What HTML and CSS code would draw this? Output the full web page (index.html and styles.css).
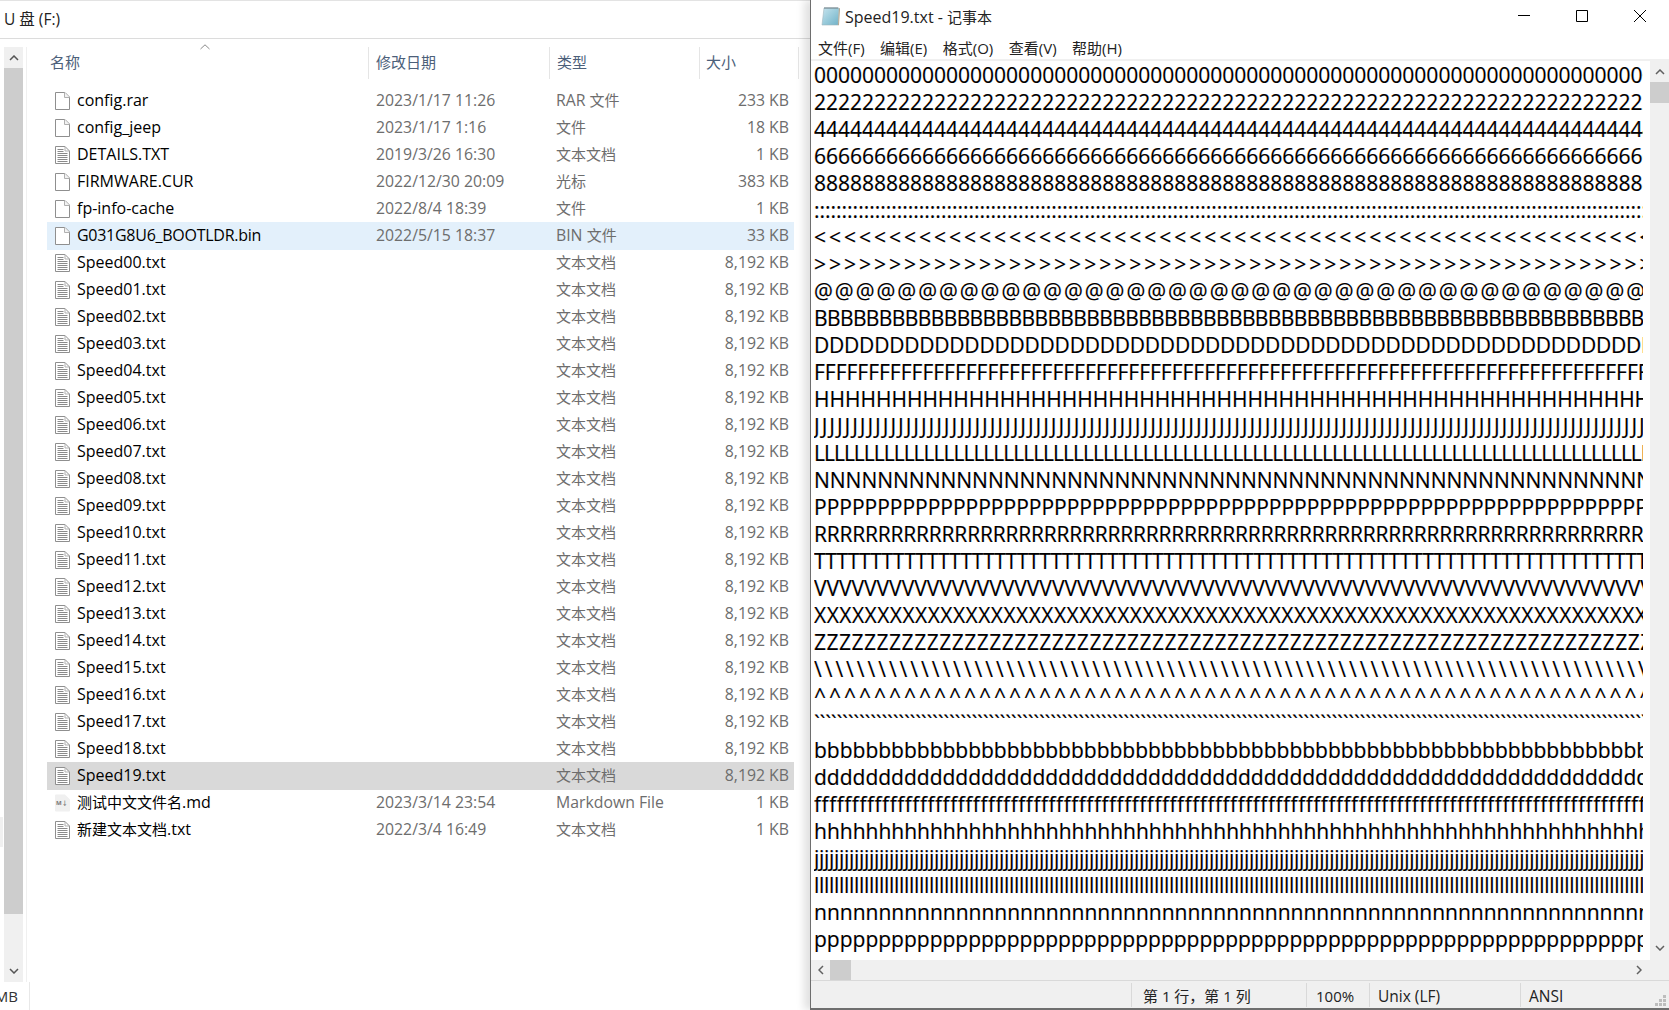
FILE: index.html
```html
<!doctype html>
<html lang="en">
<head>
    <meta charset="UTF-8">
    <meta name="viewport" content="width=device-width, initial-scale=1">
    <title>Speed19.txt - 记事本</title>
    <link rel="stylesheet" href="styles.css">
</head>
<body>
<svg class="defs" width="0" height="0">
    <symbol id="blank" viewBox="0 0 15 18">
        <path d="M.5.5h9.500l4.500 4.500v12.500h-14z" fill="#fff" stroke="#8f8f8f"/>
        <path d="M9.500.5v5h5" fill="#f2f2f2" stroke="#b0b0b0"/>
    </symbol>
    <symbol id="text" viewBox="0 0 15 18">
        <path d="M.5.500h9.500l4.500 4.500v12.500h-14z" fill="#fff" stroke="#8f8f8f"/>
        <path d="M10 .5v4.500h4.500" fill="none" stroke="#b0b0b0"/>
        <path d="M2.500 3.500h6M2.500 5.500h6M2.500 7.500h10M2.500 9.500h10M2.500 11.500h10M2.500 13.500h10M2.500 15.500h10" stroke="#8a8a8a"/>
    </symbol>
</svg>

<div class="desktop">
    <div class="explorer">
        <div class="path-bar">U 盘 (F:)</div>
        <div class="browser">
            <div class="edge"><span class="edge-mark"></span></div>
            <div class="scroll-v side-scroll">
                <svg class="arrow" width="10" height="6" viewBox="0 0 10 6"><path d="M1 5l4-4 4 4" fill="none" stroke="#555" stroke-width="1.500"/></svg>
                <div class="side-thumb"></div>
                <svg class="arrow" width="10" height="6" viewBox="0 0 10 6"><path d="M1 1l4 4 4-4" fill="none" stroke="#555" stroke-width="1.500"/></svg>
            </div>
            <div class="list">
                <div class="list-head">
                    <svg class="sort-caret" width="10" height="6" viewBox="0 0 10 6"><path d="M.5 5L5 .8 9.500 5" fill="none" stroke="#8a8a8a"/></svg>
                    <div class="col-name">名称</div>
                    <div class="col-date">修改日期</div>
                    <div class="col-type">类型</div>
                    <div class="col-size">大小</div>
                </div>
                <div class="row"><div class="name"><svg class="file-icon"><use href="#blank"/></svg>config.rar</div><div class="cell">2023/1/17 11:26</div><div class="cell">RAR <span class="cjk">文件</span></div><div class="cell size">233 KB</div></div>
                <div class="row"><div class="name"><svg class="file-icon"><use href="#blank"/></svg>config_jeep</div><div class="cell">2023/1/17 1:16</div><div class="cell cjk">文件</div><div class="cell size">18 KB</div></div>
                <div class="row"><div class="name"><svg class="file-icon"><use href="#text"/></svg>DETAILS.TXT</div><div class="cell">2019/3/26 16:30</div><div class="cell cjk">文本文档</div><div class="cell size">1 KB</div></div>
                <div class="row"><div class="name"><svg class="file-icon"><use href="#blank"/></svg>FIRMWARE.CUR</div><div class="cell">2022/12/30 20:09</div><div class="cell cjk">光标</div><div class="cell size">383 KB</div></div>
                <div class="row"><div class="name"><svg class="file-icon"><use href="#blank"/></svg>fp-info-cache</div><div class="cell">2022/8/4 18:39</div><div class="cell cjk">文件</div><div class="cell size">1 KB</div></div>
                <div class="row hover"><div class="name long-name"><svg class="file-icon"><use href="#blank"/></svg>G031G8U6_BOOTLDR.bin</div><div class="cell">2022/5/15 18:37</div><div class="cell">BIN <span class="cjk">文件</span></div><div class="cell size">33 KB</div></div>
                <div class="row"><div class="name"><svg class="file-icon"><use href="#text"/></svg>Speed00.txt</div><div class="cell"></div><div class="cell cjk">文本文档</div><div class="cell size">8,192 KB</div></div>
                <div class="row"><div class="name"><svg class="file-icon"><use href="#text"/></svg>Speed01.txt</div><div class="cell"></div><div class="cell cjk">文本文档</div><div class="cell size">8,192 KB</div></div>
                <div class="row"><div class="name"><svg class="file-icon"><use href="#text"/></svg>Speed02.txt</div><div class="cell"></div><div class="cell cjk">文本文档</div><div class="cell size">8,192 KB</div></div>
                <div class="row"><div class="name"><svg class="file-icon"><use href="#text"/></svg>Speed03.txt</div><div class="cell"></div><div class="cell cjk">文本文档</div><div class="cell size">8,192 KB</div></div>
                <div class="row"><div class="name"><svg class="file-icon"><use href="#text"/></svg>Speed04.txt</div><div class="cell"></div><div class="cell cjk">文本文档</div><div class="cell size">8,192 KB</div></div>
                <div class="row"><div class="name"><svg class="file-icon"><use href="#text"/></svg>Speed05.txt</div><div class="cell"></div><div class="cell cjk">文本文档</div><div class="cell size">8,192 KB</div></div>
                <div class="row"><div class="name"><svg class="file-icon"><use href="#text"/></svg>Speed06.txt</div><div class="cell"></div><div class="cell cjk">文本文档</div><div class="cell size">8,192 KB</div></div>
                <div class="row"><div class="name"><svg class="file-icon"><use href="#text"/></svg>Speed07.txt</div><div class="cell"></div><div class="cell cjk">文本文档</div><div class="cell size">8,192 KB</div></div>
                <div class="row"><div class="name"><svg class="file-icon"><use href="#text"/></svg>Speed08.txt</div><div class="cell"></div><div class="cell cjk">文本文档</div><div class="cell size">8,192 KB</div></div>
                <div class="row"><div class="name"><svg class="file-icon"><use href="#text"/></svg>Speed09.txt</div><div class="cell"></div><div class="cell cjk">文本文档</div><div class="cell size">8,192 KB</div></div>
                <div class="row"><div class="name"><svg class="file-icon"><use href="#text"/></svg>Speed10.txt</div><div class="cell"></div><div class="cell cjk">文本文档</div><div class="cell size">8,192 KB</div></div>
                <div class="row"><div class="name"><svg class="file-icon"><use href="#text"/></svg>Speed11.txt</div><div class="cell"></div><div class="cell cjk">文本文档</div><div class="cell size">8,192 KB</div></div>
                <div class="row"><div class="name"><svg class="file-icon"><use href="#text"/></svg>Speed12.txt</div><div class="cell"></div><div class="cell cjk">文本文档</div><div class="cell size">8,192 KB</div></div>
                <div class="row"><div class="name"><svg class="file-icon"><use href="#text"/></svg>Speed13.txt</div><div class="cell"></div><div class="cell cjk">文本文档</div><div class="cell size">8,192 KB</div></div>
                <div class="row"><div class="name"><svg class="file-icon"><use href="#text"/></svg>Speed14.txt</div><div class="cell"></div><div class="cell cjk">文本文档</div><div class="cell size">8,192 KB</div></div>
                <div class="row"><div class="name"><svg class="file-icon"><use href="#text"/></svg>Speed15.txt</div><div class="cell"></div><div class="cell cjk">文本文档</div><div class="cell size">8,192 KB</div></div>
                <div class="row"><div class="name"><svg class="file-icon"><use href="#text"/></svg>Speed16.txt</div><div class="cell"></div><div class="cell cjk">文本文档</div><div class="cell size">8,192 KB</div></div>
                <div class="row"><div class="name"><svg class="file-icon"><use href="#text"/></svg>Speed17.txt</div><div class="cell"></div><div class="cell cjk">文本文档</div><div class="cell size">8,192 KB</div></div>
                <div class="row"><div class="name"><svg class="file-icon"><use href="#text"/></svg>Speed18.txt</div><div class="cell"></div><div class="cell cjk">文本文档</div><div class="cell size">8,192 KB</div></div>
                <div class="row selected"><div class="name"><svg class="file-icon"><use href="#text"/></svg>Speed19.txt</div><div class="cell"></div><div class="cell cjk">文本文档</div><div class="cell size">8,192 KB</div></div>
                <div class="row"><div class="name"><svg class="file-icon" viewBox="0 0 15 18"><path d="M0 1.500a1 1 0 0 1 1-1h9l5 5v11a1 1 0 0 1-1 1H1a1 1 0 0 1-1-1z" fill="#f0f0f0"/><text x="1" y="11" class="md-mark">M↓</text></svg><span class="cjk">测试中文文件名</span>.md</div><div class="cell">2023/3/14 23:54</div><div class="cell">Markdown File</div><div class="cell size">1 KB</div></div>
                <div class="row"><div class="name"><svg class="file-icon"><use href="#text"/></svg><span class="cjk">新建文本文档</span>.txt</div><div class="cell">2022/3/4 16:49</div><div class="cell cjk">文本文档</div><div class="cell size">1 KB</div></div>
            </div>
        </div>
        <div class="explorer-foot"><span class="foot-size">MB</span></div>
    </div>

    <div class="notepad">
        <div class="np-title">
            <svg class="np-icon" width="20" height="20" viewBox="0 0 20 20">
                <defs><linearGradient id="pad" x1="0" y1="0" x2="1" y2="1"><stop offset="0" stop-color="#c6e4ee"/><stop offset="1" stop-color="#6fb2c8"/></linearGradient></defs>
                <path d="M3 2h15l-1 17H1z" fill="url(#pad)" stroke="#9fb6bd" stroke-width=".6"/>
                <path d="M17 19l1-17 1 .5-1 17z" fill="#b5a78e"/>
                <path d="M4 1v2M6 1v2M8 1v2M10 1v2M12 1v2M14 1v2M16 1v2" stroke="#6d7f86"/>
            </svg>
            <span class="np-name">Speed19.txt - <span class="cjk">记事本</span></span>
            <div class="win-buttons">
                <div class="win-btn"><svg width="12" height="12" viewBox="0 0 12 12"><path d="M0 5.500h12" stroke="#000"/></svg></div>
                <div class="win-btn"><svg width="12" height="12" viewBox="0 0 12 12"><path d="M.5.500h11v11h-11z" fill="none" stroke="#000"/></svg></div>
                <div class="win-btn"><svg width="12" height="12" viewBox="0 0 12 12"><path d="M0 0l12 12M12 0L0 12" stroke="#000"/></svg></div>
            </div>
        </div>
        <div class="np-menu">
            <span>文件(F)</span><span>编辑(E)</span><span>格式(O)</span><span>查看(V)</span><span>帮助(H)</span>
        </div>
        <div class="np-body">
            <div class="np-text">
                <div class="line">0000000000000000000000000000000000000000000000000000000000000000000000000000000000</div>
                <div class="line">2222222222222222222222222222222222222222222222222222222222222222222222222222222222</div>
                <div class="line">4444444444444444444444444444444444444444444444444444444444444444444444444444444444</div>
                <div class="line">6666666666666666666666666666666666666666666666666666666666666666666666666666666666</div>
                <div class="line">8888888888888888888888888888888888888888888888888888888888888888888888888888888888</div>
                <div class="line">::::::::::::::::::::::::::::::::::::::::::::::::::::::::::::::::::::::::::::::::::::::::::::::::::::::::::::::::::::::::::::::::::::::::::::::::::::::::::::::::::::::::::::::::::::::</div>
                <div class="line wide-3">&lt;&lt;&lt;&lt;&lt;&lt;&lt;&lt;&lt;&lt;&lt;&lt;&lt;&lt;&lt;&lt;&lt;&lt;&lt;&lt;&lt;&lt;&lt;&lt;&lt;&lt;&lt;&lt;&lt;&lt;&lt;&lt;&lt;&lt;&lt;&lt;&lt;&lt;&lt;&lt;&lt;&lt;&lt;&lt;&lt;&lt;&lt;&lt;&lt;&lt;&lt;&lt;&lt;&lt;&lt;&lt;&lt;&lt;&lt;&lt;&lt;&lt;&lt;&lt;&lt;&lt;&lt;&lt;&lt;&lt;&lt;&lt;</div>
                <div class="line wide-3">&gt;&gt;&gt;&gt;&gt;&gt;&gt;&gt;&gt;&gt;&gt;&gt;&gt;&gt;&gt;&gt;&gt;&gt;&gt;&gt;&gt;&gt;&gt;&gt;&gt;&gt;&gt;&gt;&gt;&gt;&gt;&gt;&gt;&gt;&gt;&gt;&gt;&gt;&gt;&gt;&gt;&gt;&gt;&gt;&gt;&gt;&gt;&gt;&gt;&gt;&gt;&gt;&gt;&gt;&gt;&gt;&gt;&gt;&gt;&gt;&gt;&gt;&gt;&gt;&gt;&gt;&gt;&gt;&gt;&gt;</div>
                <div class="line wide-2">@@@@@@@@@@@@@@@@@@@@@@@@@@@@@@@@@@@@@@@@@@@@@@@@@@@@@@@@@@@@</div>
                <div class="line tight-6">BBBBBBBBBBBBBBBBBBBBBBBBBBBBBBBBBBBBBBBBBBBBBBBBBBBBBBBBBBBBBBBBBBBBBBBBBBBBBBBBBB</div>
                <div class="line tight-2">DDDDDDDDDDDDDDDDDDDDDDDDDDDDDDDDDDDDDDDDDDDDDDDDDDDDDDDDDDDDDDDDDDDDDDDDDDDDDDDDDD</div>
                <div class="line">FFFFFFFFFFFFFFFFFFFFFFFFFFFFFFFFFFFFFFFFFFFFFFFFFFFFFFFFFFFFFFFFFFFFFFFFFFFFFFFFFFFFFFFFFFFFFFFFFFFFFF</div>
                <div class="line">HHHHHHHHHHHHHHHHHHHHHHHHHHHHHHHHHHHHHHHHHHHHHHHHHHHHHHHHHHHHHHHHHHHHHHHHHHHHHHHH</div>
                <div class="line wide-2">JJJJJJJJJJJJJJJJJJJJJJJJJJJJJJJJJJJJJJJJJJJJJJJJJJJJJJJJJJJJJJJJJJJJJJJJJJJJJJJJJJJJJJJJJJJJJJJJJJJJJJJJJJJJJJJJJJJJJJJJJJJJJJJJJJJJJJJJJJJJJJJJJJJJJJJJJJJJ</div>
                <div class="line tight-10">LLLLLLLLLLLLLLLLLLLLLLLLLLLLLLLLLLLLLLLLLLLLLLLLLLLLLLLLLLLLLLLLLLLLLLLLLLLLLLLLLLLLLLLLLLLLLLLLLLLLLL</div>
                <div class="line">NNNNNNNNNNNNNNNNNNNNNNNNNNNNNNNNNNNNNNNNNNNNNNNNNNNNNNNNNNNNNNNNNNNNNNNNNNNNNNNNNN</div>
                <div class="line">PPPPPPPPPPPPPPPPPPPPPPPPPPPPPPPPPPPPPPPPPPPPPPPPPPPPPPPPPPPPPPPPPPPPPPPPPPPPPPPPPPPPPPPP</div>
                <div class="line tight-2">RRRRRRRRRRRRRRRRRRRRRRRRRRRRRRRRRRRRRRRRRRRRRRRRRRRRRRRRRRRRRRRRRRRRRRRRRRRRRRRRRRRRR</div>
                <div class="line tight-3">TTTTTTTTTTTTTTTTTTTTTTTTTTTTTTTTTTTTTTTTTTTTTTTTTTTTTTTTTTTTTTTTTTTTTTTTTTTTTTTTTTTTTTTTTTTTT</div>
                <div class="line">VVVVVVVVVVVVVVVVVVVVVVVVVVVVVVVVVVVVVVVVVVVVVVVVVVVVVVVVVVVVVVVVVVVVVVVVVVVVVVVVVVVVVVV</div>
                <div class="line wide-half">XXXXXXXXXXXXXXXXXXXXXXXXXXXXXXXXXXXXXXXXXXXXXXXXXXXXXXXXXXXXXXXXXXXXXXXXXXXXXXXXXXXXXXXX</div>
                <div class="line wide-half">ZZZZZZZZZZZZZZZZZZZZZZZZZZZZZZZZZZZZZZZZZZZZZZZZZZZZZZZZZZZZZZZZZZZZZZZZZZZZZZZZZZZZZZZZ</div>
                <div class="line wide-3">\\\\\\\\\\\\\\\\\\\\\\\\\\\\\\\\\\\\\\\\\\\\\\\\\\\\\\\\\\\\\\\\\\\\\\\\\\\\\\\\\\\\\\\\\\\\\\\\\\\\\\\\\\\\\\\\\\\\\\\\\\\\\\\\\\\\\\\\\\\\\\\</div>
                <div class="line wide-3">^^^^^^^^^^^^^^^^^^^^^^^^^^^^^^^^^^^^^^^^^^^^^^^^^^^^^^^^^^^^^^^^^^^^^^^^^^^^^^^^</div>
                <div class="line tight-2">&#96;&#96;&#96;&#96;&#96;&#96;&#96;&#96;&#96;&#96;&#96;&#96;&#96;&#96;&#96;&#96;&#96;&#96;&#96;&#96;&#96;&#96;&#96;&#96;&#96;&#96;&#96;&#96;&#96;&#96;&#96;&#96;&#96;&#96;&#96;&#96;&#96;&#96;&#96;&#96;&#96;&#96;&#96;&#96;&#96;&#96;&#96;&#96;&#96;&#96;&#96;&#96;&#96;&#96;&#96;&#96;&#96;&#96;&#96;&#96;&#96;&#96;&#96;&#96;&#96;&#96;&#96;&#96;&#96;&#96;&#96;&#96;&#96;&#96;&#96;&#96;&#96;&#96;&#96;&#96;&#96;&#96;&#96;&#96;&#96;&#96;&#96;&#96;&#96;&#96;&#96;&#96;&#96;&#96;&#96;&#96;&#96;&#96;&#96;&#96;&#96;&#96;&#96;&#96;&#96;&#96;&#96;&#96;&#96;&#96;&#96;&#96;&#96;&#96;&#96;&#96;&#96;&#96;&#96;&#96;&#96;&#96;&#96;&#96;&#96;&#96;&#96;&#96;&#96;&#96;&#96;&#96;&#96;&#96;&#96;&#96;&#96;&#96;&#96;&#96;&#96;&#96;&#96;&#96;&#96;&#96;&#96;&#96;&#96;&#96;&#96;&#96;&#96;&#96;&#96;&#96;&#96;</div>
                <div class="line">bbbbbbbbbbbbbbbbbbbbbbbbbbbbbbbbbbbbbbbbbbbbbbbbbbbbbbbbbbbbbbbbbbbbbbbbbbbbbbbbbbbbbbbb</div>
                <div class="line">dddddddddddddddddddddddddddddddddddddddddddddddddddddddddddddddddddddddddddddddddddddddd</div>
                <div class="line wide-half">ffffffffffffffffffffffffffffffffffffffffffffffffffffffffffffffffffffffffffffffffffffffffffffffffffffffffffffffffffffffffffffffffffffffffffffffffffffffffffffffffffff</div>
                <div class="line">hhhhhhhhhhhhhhhhhhhhhhhhhhhhhhhhhhhhhhhhhhhhhhhhhhhhhhhhhhhhhhhhhhhhhhhhhhhhhhhhhhhhhhhh</div>
                <div class="line tight-3">jjjjjjjjjjjjjjjjjjjjjjjjjjjjjjjjjjjjjjjjjjjjjjjjjjjjjjjjjjjjjjjjjjjjjjjjjjjjjjjjjjjjjjjjjjjjjjjjjjjjjjjjjjjjjjjjjjjjjjjjjjjjjjjjjjjjjjjjjjjjjjjjjjjjjjjjjjjjjjjjjjjjjjjjjjjjjjjjjjjjjj</div>
                <div class="line tight-3">llllllllllllllllllllllllllllllllllllllllllllllllllllllllllllllllllllllllllllllllllllllllllllllllllllllllllllllllllllllllllllllllllllllllllllllllllllllllllllllllllllllllllllllllll</div>
                <div class="line">nnnnnnnnnnnnnnnnnnnnnnnnnnnnnnnnnnnnnnnnnnnnnnnnnnnnnnnnnnnnnnnnnnnnnnnnnnnnnnnnnnnnn</div>
                <div class="line">pppppppppppppppppppppppppppppppppppppppppppppppppppppppppppppppppppppppppppppppppppppppp</div>
            </div>
            <div class="scroll-v np-scroll">
                <svg class="arrow" width="10" height="6" viewBox="0 0 10 6"><path d="M1 5l4-4 4 4" fill="none" stroke="#606060" stroke-width="1.500"/></svg>
                <div class="np-thumb"></div>
                <div class="spacer"></div>
                <svg class="arrow" width="10" height="6" viewBox="0 0 10 6"><path d="M1 1l4 4 4-4" fill="none" stroke="#606060" stroke-width="1.500"/></svg>
            </div>
        </div>
        <div class="scroll-h">
            <svg width="6" height="10" viewBox="0 0 6 10"><path d="M5 1L1 5l4 4" fill="none" stroke="#606060" stroke-width="1.500"/></svg>
            <div class="h-thumb"></div>
            <div class="spacer"></div>
            <svg width="6" height="10" viewBox="0 0 6 10"><path d="M1 1l4 4-4 4" fill="none" stroke="#606060" stroke-width="1.500"/></svg>
        </div>
        <div class="np-status">
            <div class="st-pos">第 1 行，第 1 列</div>
            <div class="st-zoom">100%</div>
            <div class="st-eol">Unix (LF)</div>
            <div class="st-enc">ANSI</div>
            <svg class="grip" width="12" height="12" viewBox="0 0 12 12"><path d="M8 0h3v3H8zM4 4h3v3H4zM8 4h3v3H8zM0 8h3v3H0zM4 8h3v3H4zM8 8h3v3H8z" fill="#bdbdbd"/></svg>
        </div>
    </div>
</div>
</body>
</html>
```

FILE: styles.css
```css
html, body {
    margin: 0;
    padding: 0;
    height: 100%;
    overflow: hidden;
    background-color: #fff;
}

body {
    font-family: "Open Sans", "Noto Sans CJK SC", sans-serif;
    font-size: 15px;
    color: #000;
}

.defs {
    display: block;
    height: 0;
}

.cjk {
    font-size: 15px;
}

.desktop {
    display: flex;
    height: 1010px;
}

/* explorer window */
.explorer {
    width: 810px;
    display: flex;
    flex-direction: column;
    flex-shrink: 0;
}

.path-bar {
    height: 37px;
    line-height: 37px;
    padding-left: 4px;
    border-top: 1px solid #e3e3e3;
    border-bottom: 1px solid #dcdcdc;
    color: #222;
    font-size: 15.500px;
}

.browser {
    display: flex;
    height: 943px;
}

.edge {
    width: 4px;
    padding-top: 778px;
    box-sizing: border-box;
}

.edge-mark {
    display: block;
    width: 3px;
    height: 30px;
    background-color: #f0f0f0;
}

.scroll-v {
    width: 19px;
    display: flex;
    flex-direction: column;
    align-items: center;
    background-color: #f0f0f0;
}

.side-scroll {
    margin-top: 8px;
    height: 935px;
    box-shadow: 3px 0 0 #fff, 4px 0 0 #f0f0f0;
}

.side-scroll .arrow:first-child {
    margin: 8px 0 7px;
}

.side-scroll .arrow:last-child {
    margin-top: auto;
    margin-bottom: 8px;
}

.side-thumb {
    width: 100%;
    height: 846px;
    background-color: #cdcdcd;
}

.list {
    position: relative;
    width: 752px;
    margin-left: 24px;
    padding-top: 8px;
}

.list-head {
    display: grid;
    grid-template-columns: 321px 181px 150px 100px;
    height: 32px;
    margin-bottom: 8px;
    color: #4c607a;
    line-height: 30px;
}

.list-head > div {
    box-sizing: border-box;
    padding-left: 7px;
    border-left: 1px solid #e5e5e5;
}

.list-head > .col-name {
    padding-left: 3px;
    border-left: none;
}

.list-head > .col-size {
    padding-left: 6px;
    border-right: 1px solid #e5e5e5;
}

.sort-caret {
    position: absolute;
    left: 153px;
    top: 5px;
}

.row {
    display: grid;
    grid-template-columns: 329px 180px 150px 83px;
    width: 747px;
    height: 27px;
    line-height: 27px;
    color: #6d6d6d;
    white-space: nowrap;
    font-size: 15.800px;
}

.row.hover {
    background-color: #e3f0fb;
    box-shadow: 0 1px 0 #e3f0fb;
}

.row.selected {
    background-color: #d9d9d9;
    box-shadow: 0 1px 0 #d9d9d9;
}

.name {
    display: flex;
    align-items: center;
    color: #000;
    font-size: 16px;
}

.long-name {
    letter-spacing: -0.27px;
}

.file-icon {
    width: 15px;
    height: 18px;
    margin: 0 7px 0 8px;
    flex-shrink: 0;
}

.md-mark {
    font-size: 6px;
    font-weight: 700;
    fill: #777;
}

.size {
    text-align: right;
}

.explorer-foot {
    height: 28px;
    width: 30px;
    display: flex;
    justify-content: flex-end;
    border-right: 1px solid #e8e8e8;
    overflow: hidden;
    line-height: 28px;
    box-sizing: border-box;
    padding-right: 11px;
    color: #333;
}

.foot-size {
    flex-shrink: 0;
    white-space: nowrap;
}

/* notepad window */
.notepad {
    width: 859px;
    height: 1010px;
    box-sizing: border-box;
    display: flex;
    flex-direction: column;
    flex-shrink: 0;
    border-left: 1px solid #6e6e6e;
    border-bottom: 2px solid #6e6e6e;
    background-color: #fff;
    box-shadow: -6px 0 8px rgba(0, 0, 0, 0.12);
    z-index: 1;
}

.np-title {
    height: 31px;
    display: flex;
    align-items: center;
    padding-left: 10px;
}

.np-icon {
    flex-shrink: 0;
}

.np-name {
    margin: 2px 0 0 4px;
    font-size: 16px;
    color: #222;
}

.win-buttons {
    display: flex;
    margin-left: auto;
}

.win-btn {
    width: 58px;
    height: 31px;
    display: flex;
    align-items: center;
    justify-content: center;
}

.np-menu {
    height: 30px;
    box-sizing: border-box;
    display: flex;
    align-items: center;
    gap: 15.500px;
    padding: 4px 0 0 7px;
    font-size: 15px;
    border-bottom: 2px solid #f0f0f0;
    color: #222;
}

.np-body {
    display: flex;
    height: 899px;
}

.np-text {
    width: 829px;
    margin-left: 3px;
    margin-right: 7px;
    padding-top: 1px;
    box-sizing: border-box;
    overflow: hidden;
    font-size: 21px;
    font-kerning: none;
    /* the screenshot has ClearType fringes: orange on the left, blue on the right */
    text-shadow: -0.4px 0 rgba(255, 140, 0, 0.35), 0.4px 0 rgba(0, 120, 255, 0.35);
}

.line {
    height: 27px;
    line-height: 27px;
    white-space: pre;
    overflow: hidden;
}

/* Open Sans glyph widths differ from the screenshot font, so the repeated
   character lines get their pitch back with letter spacing */
.wide-3 {
    letter-spacing: 3px;
}

.wide-2 {
    letter-spacing: 2px;
}

.wide-half {
    letter-spacing: 0.5px;
}

.tight-2 {
    letter-spacing: -0.2px;
}

.tight-3 {
    letter-spacing: -0.3px;
}

.tight-6 {
    letter-spacing: -0.6px;
}

.tight-10 {
    letter-spacing: -1px;
}

.np-scroll {
    flex-shrink: 0;
}

.np-scroll .arrow:first-child {
    margin: 8px 0 7px;
}

.np-scroll .arrow:last-child {
    margin-bottom: 9px;
}

.np-thumb {
    width: 100%;
    height: 21px;
    background-color: #cdcdcd;
}

.spacer {
    flex: 1;
}

.scroll-h {
    height: 20px;
    display: flex;
    align-items: center;
    padding: 0 27px 0 7px;
    background-color: #f0f0f0;
    border-bottom: 1px solid #d9d9d9;
}

.h-thumb {
    width: 21px;
    height: 20px;
    margin-left: 6px;
    background-color: #cdcdcd;
}

.np-status {
    position: relative;
    flex: 1;
    display: flex;
    background-color: #f0f0f0;
    font-size: 15px;
    color: #222;
}

.np-status > div {
    box-sizing: border-box;
    padding-left: 11px;
    border-left: 1px solid #d9d9d9;
    margin-top: 2px;
    height: 24px;
    line-height: 26px;
}

.st-pos {
    margin-left: 320px;
    width: 175px;
}

.np-status > .st-zoom {
    width: 63px;
    padding-left: 9px;
}

.np-status > .st-eol {
    width: 151px;
    padding-left: 8px;
    font-size: 15.500px;
}

.np-status > .st-enc {
    width: 149px;
    padding-left: 8px;
    font-size: 15.500px;
}

.grip {
    position: absolute;
    right: 2px;
    bottom: 1px;
}
```
